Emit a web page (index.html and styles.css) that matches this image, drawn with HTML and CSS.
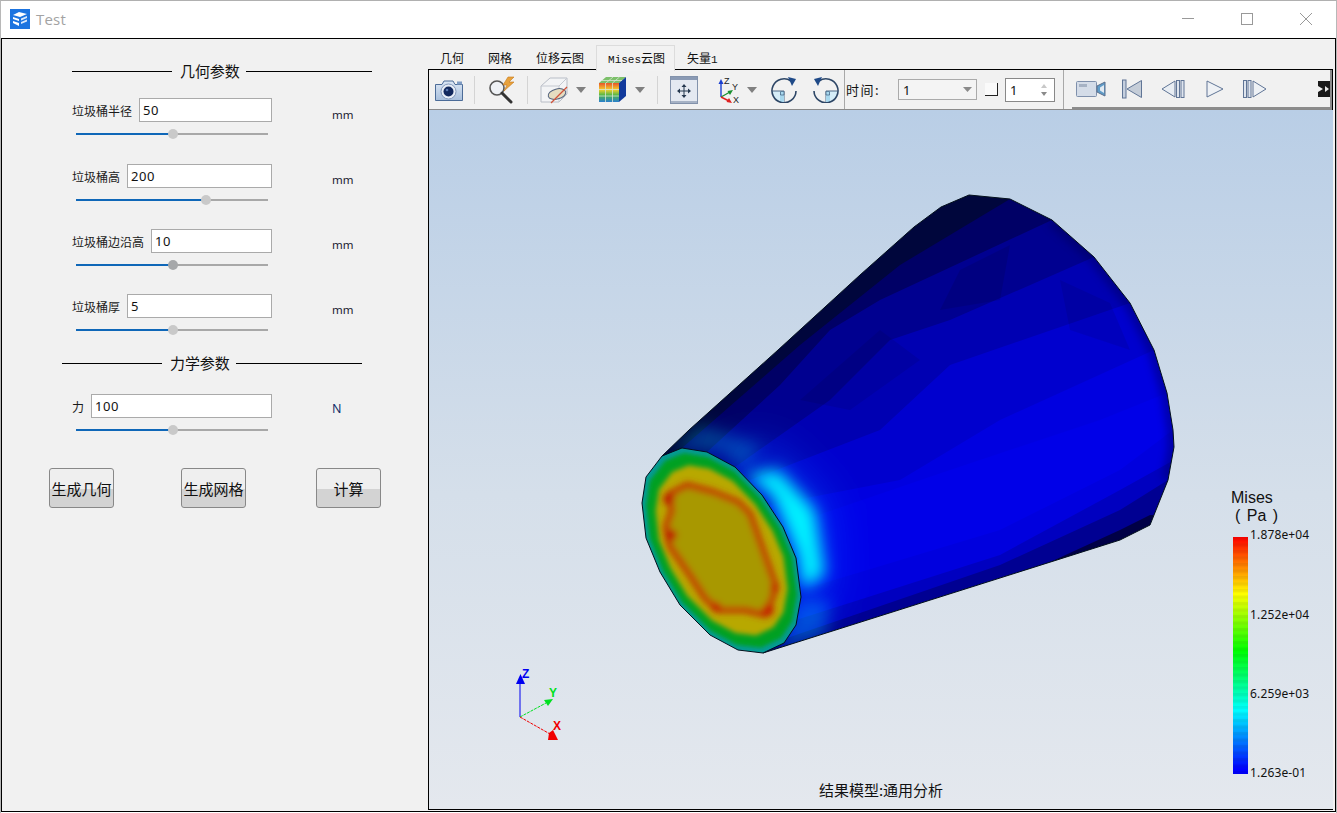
FILE: index.html
```html
<!DOCTYPE html>
<html lang="zh">
<head>
<meta charset="utf-8">
<title>Test</title>
<link rel="stylesheet" href="styles.css">
</head>
<body>
<div class="window">
  <header class="titlebar">
    <svg class="app-icon" width="20" height="20" viewBox="0 0 20 20">
      <rect width="20" height="20" fill="#1c74e0"/>
      <path d="M3 6 L9 3 L17 5 L10 8 Z M3 8 L9 10 V12 L3 10 Z M3 12 L9 14 V17 L3 14 Z" fill="#fff"/>
      <path d="M11 9.5 L17 7 V9 L11 11.5 Z M11 13 L17 10.5 V12.5 L11 15 Z" fill="#dbe9fb"/>
    </svg>
    <span class="app-name">Test</span>
    <div class="win-btns">
      <svg width="58" height="14" viewBox="0 0 58 14"><path d="M23 6.500H35" stroke="#999" fill="none"/></svg>
      <svg width="58" height="14" viewBox="0 0 58 14"><rect x="23.500" y="1.500" width="11" height="11" stroke="#999" fill="none"/></svg>
      <svg width="58" height="14" viewBox="0 0 58 14"><path d="M23 1L35 13M35 1L23 13" stroke="#999" fill="none"/></svg>
    </div>
  </header>
  <main class="content">
    <section class="params">
      <div class="heading"><span class="rule"></span><span class="heading-text">几何参数</span><span class="rule rule-r"></span></div>
      <div class="param param-first">
        <div class="field"><label>垃圾桶半径</label><input value="50"></div><span class="unit">mm</span>
        <div class="slider"><span class="fill" style="width:97px"></span><span class="thumb"></span><span class="rest"></span></div>
      </div>
      <div class="param">
        <div class="field"><label>垃圾桶高</label><input value="200"></div><span class="unit">mm</span>
        <div class="slider"><span class="fill" style="width:130px"></span><span class="thumb"></span><span class="rest"></span></div>
      </div>
      <div class="param">
        <div class="field"><label>垃圾桶边沿高</label><input value="10"></div><span class="unit">mm</span>
        <div class="slider"><span class="fill" style="width:97px"></span><span class="thumb thumb-dark"></span><span class="rest"></span></div>
      </div>
      <div class="param param-last">
        <div class="field"><label>垃圾桶厚</label><input value="5"></div><span class="unit">mm</span>
        <div class="slider"><span class="fill" style="width:97px"></span><span class="thumb"></span><span class="rest"></span></div>
      </div>
      <div class="heading heading-2"><span class="rule"></span><span class="heading-text">力学参数</span><span class="rule rule-r"></span></div>
      <div class="param param-force">
        <div class="field"><label>力</label><input value="100"></div><span class="unit unit-n">N</span>
        <div class="slider"><span class="fill" style="width:97px"></span><span class="thumb"></span><span class="rest"></span></div>
      </div>
      <div class="actions">
        <button>生成几何</button><button>生成网格</button><button>计算</button>
      </div>
    </section>
    <section class="results">
      <nav class="tabs">
        <span class="tab">几何</span><span class="tab">网格</span><span class="tab">位移云图</span><span class="tab tab-active"><span class="mono">Mises</span>云图</span><span class="tab">矢量<span class="mono">1</span></span>
      </nav>
      <div class="frame">
        <div class="toolbar">
          <svg class="ti camera" width="30" height="24" viewBox="0 0 30 24">
            <defs><linearGradient id="cam" x1="0" y1="0" x2="0" y2="1"><stop offset="0" stop-color="#dce7f5"/><stop offset="1" stop-color="#a8bfdc"/></linearGradient></defs>
            <path d="M1.500 6.500 H8 L10 3 H19 L21 6.500 H28.500 V22.500 H1.500 Z" fill="url(#cam)" stroke="#4c6c98" stroke-linejoin="round"/>
            <rect x="23" y="3.500" width="5" height="3" fill="#7f9cc4"/>
            <circle cx="14.500" cy="13.500" r="7.500" fill="#e8eef7" stroke="#8398ba"/>
            <circle cx="14.500" cy="13.500" r="5" fill="#13295e"/>
            <circle cx="13" cy="12" r="1.300" fill="#5a78b0"/>
          </svg>
          <span class="sep"></span>
          <svg class="ti magnifier" width="30" height="28" viewBox="0 0 30 28">
            <circle cx="10" cy="12" r="7" fill="#eef1f5" stroke="#555" stroke-width="1.600"/>
            <path d="M15 17 L24 26" stroke="#333" stroke-width="3" stroke-linecap="round"/>
            <path d="M21 1 L16 9 H20 L17 15 L27 6 H22 L27 1 Z" fill="#e8a23c" stroke="#c67a1c" stroke-width=".6"/>
          </svg>
          <span class="sep"></span>
          <svg class="ti cube" width="29" height="28" viewBox="0 0 29 28">
            <path d="M1 10 L10 2 H27 V18 L19 26 H1 Z" fill="#f3f4f6" stroke="#b8bdc6"/>
            <path d="M1 10 H19 V26 M19 10 L27 2" fill="none" stroke="#c4c8d0"/>
            <ellipse cx="17" cy="18" rx="9" ry="5" fill="#e5dcc0" stroke="#53627c" transform="rotate(-15 17 18)"/>
            <path d="M11 27 L27 11" stroke="#d0533a" stroke-width="1.200"/>
          </svg>
          <svg class="ti caret" width="10" height="6" viewBox="0 0 10 6"><path d="M0 0H10L5 6Z" fill="#808080"/></svg>
          <svg class="ti colorcube" width="28" height="27" viewBox="0 0 28 27">
            <defs><linearGradient id="rain" x1="0" y1="0" x2="0" y2="1"><stop offset="0" stop-color="#e8542a"/><stop offset=".35" stop-color="#f4d02c"/><stop offset=".65" stop-color="#49b54a"/><stop offset="1" stop-color="#2c7fd0"/></linearGradient></defs>
            <path d="M0 7 L7 1 H27 L20 7 Z" fill="#7cc06a"/>
            <path d="M20 7 L27 1 V20 L20 26 Z" fill="#123a9c"/>
            <rect x="0" y="7" width="20" height="19" fill="url(#rain)"/>
            <path d="M6.500 7V26M13.500 7V26M0 13.500H20M0 20H20M7 7 L14 1M13.500 7 L20.500 1M3 4.500H23" stroke="#d9e4d4" stroke-width=".8" fill="none"/>
          </svg>
          <svg class="ti caret" width="10" height="6" viewBox="0 0 10 6"><path d="M0 0H10L5 6Z" fill="#808080"/></svg>
          <span class="sep sep-b"></span>
          <svg class="ti fit" width="28" height="28" viewBox="0 0 28 28">
            <rect x=".5" y=".5" width="27" height="27" fill="#e4e9f1" stroke="#8292ab"/>
            <rect x="1" y="1" width="26" height="3" fill="#8a9ab4"/>
            <rect x="1" y="25" width="26" height="2" fill="#a6b2c5"/>
            <path d="M14 10V20M9 15H19" stroke="#25384f" fill="none"/>
            <path d="M14 8L11.500 11H16.500ZM14 22L11.500 19H16.500ZM7 15L10 12.500V17.500ZM21 15L18 12.500V17.500Z" fill="#25384f"/>
          </svg>
          <svg class="ti axes" width="25" height="28" viewBox="0 0 25 28">
            <path d="M6 21V7" stroke="#1a3fd0" stroke-width="1.400"/><path d="M6 3L3.500 8H8.500Z" fill="#1a3fd0"/>
            <path d="M6 21L15 16" stroke="#1a9030" stroke-width="1.400"/><path d="M18 14L12.500 15L15 19Z" fill="#1a9030"/>
            <path d="M6 21L14 25" stroke="#e02020" stroke-width="1.400"/><path d="M17 27L11.500 26L14 22Z" fill="#e02020"/>
            <text class="axis-t" x="9" y="8">Z</text><text class="axis-t" x="17" y="14">Y</text><text class="axis-t" x="18" y="27">X</text>
          </svg>
          <svg class="ti caret" width="10" height="6" viewBox="0 0 10 6"><path d="M0 0H10L5 6Z" fill="#808080"/></svg>
          <svg class="ti rot" width="27" height="26" viewBox="0 0 27 26">
            <path d="M13 14H1.500A12 12 0 0 0 13 25.500Z" fill="#d6edf8"/>
            <path d="M1.500 14H13V25.500" fill="none" stroke="#2c4a6c" stroke-width=".8"/>
            <path d="M9 14H13V25H9Z" fill="#a8d8ee"/>
            <path d="M9.500 14.500H13V18H9.500Z" fill="none" stroke="#2c4a6c" stroke-width=".6"/>
            <path d="M20 4A12 12 0 1 0 25 14" fill="none" stroke="#2d4666" stroke-width="1.600"/>
            <path d="M17 0L25 2L21 9Z" fill="#1f4a88"/>
          </svg>
          <svg class="ti rot rot-2" width="27" height="26" viewBox="0 0 27 26">
            <path d="M14 14H25.500A12 12 0 0 1 14 25.500Z" fill="#d6edf8"/>
            <path d="M25.500 14H14V25.500" fill="none" stroke="#2c4a6c" stroke-width=".8"/>
            <path d="M14 14H18V25H14Z" fill="#a8d8ee"/>
            <path d="M14 14.500H17.500V18H14Z" fill="none" stroke="#2c4a6c" stroke-width=".6"/>
            <path d="M7 4A12 12 0 1 1 2 14" fill="none" stroke="#2d4666" stroke-width="1.600"/>
            <path d="M10 0L2 2L6 9Z" fill="#1f4a88"/>
          </svg>
          <span class="sep sep-full"></span>
          <span class="time-label">时间:</span>
          <div class="combo"><span class="latin">1</span><svg width="9" height="5" viewBox="0 0 9 5"><path d="M0 0H9L4.500 5Z" fill="#8a8a8a"/></svg></div>
          <span class="check"></span>
          <div class="spin"><span class="latin">1</span><svg width="6" height="14" viewBox="0 0 6 14"><path d="M3 1L6 5H0Z" fill="#c8c8c8"/><path d="M3 13L6 9H0Z" fill="#8a8a8a"/></svg></div>
          <span class="sep sep-full sep-c"></span>
          <div class="player">
            <svg class="pi" width="30" height="18" viewBox="0 0 30 18">
              <rect x=".5" y="1.500" width="20" height="15" rx="1" fill="#d4dce8" stroke="#7f90ac"/>
              <rect x="3" y="4" width="8" height="3" fill="#a6b2c4"/>
              <path d="M21 6L29 2V16L21 12Z" fill="#5f9cc8" stroke="#5c6f8c"/>
              <path d="M24 7.500L28 5V13L24 10.500Z" fill="#e2eaf2"/>
            </svg>
            <svg class="pi pi-a" width="20" height="20" viewBox="0 0 20 20"><rect x=".5" y="1" width="3.500" height="18" fill="#c5cfde" stroke="#607596"/><path d="M19.500 1.500V18.500L5 10Z" fill="#c5cdd8" stroke="#607596"/></svg>
            <svg class="pi pi-b" width="24" height="20" viewBox="0 0 24 20"><path d="M14 2V18L1 10Z" fill="#e8edf3" stroke="#607596"/><rect x="15.500" y="1.500" width="3" height="17" fill="#dfe5ee" stroke="#607596"/><rect x="20" y="1.500" width="3" height="17" fill="#dfe5ee" stroke="#607596"/></svg>
            <svg class="pi pi-c" width="18" height="20" viewBox="0 0 18 20"><path d="M1 2V18L17 10Z" fill="#eef1f5" stroke="#607596"/></svg>
            <svg class="pi pi-d" width="24" height="20" viewBox="0 0 24 20"><rect x=".5" y="1.500" width="3" height="17" fill="#dfe5ee" stroke="#607596"/><rect x="5" y="1.500" width="3" height="17" fill="#dfe5ee" stroke="#607596"/><path d="M10 2V18L23 10Z" fill="#eef1f5" stroke="#607596"/></svg>
            <svg class="pi pi-e" width="12" height="18" viewBox="0 0 12 18"><path d="M0 1H12V17H0V12L5 9L0 6Z" fill="#1a1a1a"/><path d="M7 6L11 9L7 12Z" fill="#e8e8e8"/></svg>
          </div>
        </div>
        <div class="view">
          <svg class="scene" width="904" height="699" viewBox="429 110 904 699">
            <defs>
              <linearGradient id="bg" x1="0" y1="0" x2="0" y2="1"><stop offset="0" stop-color="#b9cee6"/><stop offset=".55" stop-color="#d5dfea"/><stop offset="1" stop-color="#e4e8ee"/></linearGradient>
              <linearGradient id="ramp" x1="0" y1="0" x2="0" y2="1"><stop offset="0" stop-color="#ff0000"/><stop offset=".24" stop-color="#ffff00"/><stop offset=".48" stop-color="#00ff00"/><stop offset=".73" stop-color="#00ffff"/><stop offset=".98" stop-color="#0000ff"/><stop offset="1" stop-color="#0000ff"/></linearGradient>
              <pattern id="bands" width="4" height="6.500" patternUnits="userSpaceOnUse" y="537"><rect width="4" height="3.200" fill="#000" opacity=".05"/></pattern>
              <filter id="b2" x="-20%" y="-20%" width="140%" height="140%"><feGaussianBlur stdDeviation="2.500"/></filter>
              <filter id="b3" x="-20%" y="-20%" width="140%" height="140%"><feGaussianBlur stdDeviation="3"/></filter>
              <filter id="b4" x="-20%" y="-20%" width="140%" height="140%"><feGaussianBlur stdDeviation="4"/></filter>
              <filter id="b8" x="-50%" y="-50%" width="200%" height="200%"><feGaussianBlur stdDeviation="8"/></filter>
              <filter id="b12" x="-50%" y="-50%" width="200%" height="200%"><feGaussianBlur stdDeviation="11"/></filter>
              <filter id="b24" x="-50%" y="-50%" width="200%" height="200%"><feGaussianBlur stdDeviation="22"/></filter>
              <clipPath id="body"><polygon points="662,456 689,430 778,350 860,275 914,227 941,207 969,195 1010,199 1052,220 1094,257 1130,303 1154,350 1167,393 1173,430 1174,447 1168,480 1150,525 1120,540 763,653"/></clipPath>
              <clipPath id="cap"><polygon points="662,456 682,448 707,452 735,467 762,495 783,527 796,558 801,597 796,625 784,643 763,653 738,650 710,635 680,605 660,572 646,538 642,503 646,477"/></clipPath>
            </defs>
            <rect x="429" y="110" width="904" height="699" fill="url(#bg)"/>

            <g clip-path="url(#body)">
              <rect x="640" y="190" width="540" height="470" fill="#00063c"/>
              <polygon fill="#000066" points="682,448 800,345 900,265 1010,199 1200,199 1200,660 682,660"/>
              <polygon fill="#000090" points="707,452 780,385 830,330 880,300 1052,220 1200,220 1200,660 700,660"/>
              <polygon fill="#0000b2" points="735,467 830,400 890,340 950,320 1094,257 1200,257 1200,660 700,660"/>
              <polygon fill="#0000ce" points="750,480 880,430 950,365 1130,303 1200,303 1200,660 700,660"/>
              <polygon fill="#0000e0" points="770,505 900,480 1000,420 1154,350 1200,350 1200,660 700,660"/>
              <polygon fill="#0000e8" points="783,527 950,470 1100,420 1167,393 1200,393 1200,660 700,660"/>
              <polygon fill="#0000de" points="801,590 1000,530 1120,470 1173,430 1200,430 1200,660 700,660"/>
              <polygon fill="#0000c0" points="796,620 1000,555 1120,490 1174,460 1200,460 1200,660 700,660"/>
              <polygon fill="#000092" points="790,637 1000,565 1120,510 1168,480 1200,480 1200,660 700,660"/>
              <polygon fill="#000046" points="770,652 1000,585 1120,530 1150,515 1200,515 1200,660 700,660"/>
              <polygon points="800,400 880,330 920,360 850,410" fill="#000" opacity=".08"/>
              <polygon points="960,270 1010,245 1000,300 940,310" fill="#000" opacity=".1"/>
              <polygon points="1060,280 1110,303 1130,350 1070,330" fill="#000" opacity=".08"/>
              <polyline points="1052,220 1094,257 1130,303 1154,350 1167,393 1173,430 1174,447 1168,480" fill="none" stroke="#00004a" stroke-width="12" opacity=".4" filter="url(#b4)"/>
              <polygon points="725,450 750,470 790,530 805,600 800,630 830,590 825,505 770,450" fill="#0058ff" opacity=".6" filter="url(#b24)" class="screen"/>
              <polygon points="745,475 772,495 797,555 802,590 825,575 815,510 778,470" fill="#00f0ff" filter="url(#b8)" class="screen"/>
              <polygon points="672,450 720,452 745,470 760,445 700,425" fill="#0090a8" opacity=".4" filter="url(#b8)" class="screen"/>
              <polygon points="796,600 780,650 825,635 830,600" fill="#0090b0" opacity=".5" filter="url(#b8)" class="screen"/>
            </g>
            <polyline class="edge" points="662,456 689,430 778,350 860,275 914,227 941,207 969,195 1010,199 1052,220 1094,257 1130,303 1154,350 1167,393 1173,430 1174,447 1168,480 1150,525 1120,540 763,653"/>

            <g clip-path="url(#cap)">
              <rect x="630" y="440" width="180" height="220" fill="#059a98"/>
              <polygon points="662,456 682,448 707,452 735,467 762,495 783,527 796,558 801,597 796,625 784,643 763,653 738,650 710,635 680,605 660,572 646,538 642,503 646,477" transform="translate(722 550) scale(.95) translate(-722 -550)" fill="#00a020" filter="url(#b2)"/>
              <polygon points="662,456 682,448 707,452 735,467 762,495 783,527 796,558 801,597 796,625 784,643 763,653 738,650 710,635 680,605 660,572 646,538 642,503 646,477" transform="translate(722 550) scale(.83) translate(-722 -550)" fill="#b8a800" filter="url(#b3)"/>
              <g filter="url(#b3)">
                <polygon points="668,495 687,485 713,492 738,502 750,514 760,542 776,587 766,615 745,610 718,610 705,598 690,575 670,546 666,527 672,510" fill="#a89800" stroke="#b8a000" stroke-width="2"/>
                <polyline points="668,495 687,485 713,492 738,502 750,514 760,542 776,587 766,615 745,610 718,610 705,598 690,575 670,546 666,527 672,510 668,495" fill="none" stroke="#c23000" stroke-width="6" stroke-linejoin="round"/>
                <circle cx="669" cy="499" r="6" fill="#bc2200"/>
                <circle cx="671" cy="535" r="6" fill="#bc2200"/>
                <circle cx="768" cy="610" r="6" fill="#c42200"/>
                <circle cx="774" cy="588" r="4" fill="#c42200"/>
                <circle cx="716" cy="607" r="5" fill="#c42200"/>
              </g>
            </g>
            <polygon class="edge" points="662,456 682,448 707,452 735,467 762,495 783,527 796,558 801,597 796,625 784,643 763,653 738,650 710,635 680,605 660,572 646,538 642,503 646,477"/>

            <path d="M520 717V684" stroke="#0000f0" fill="none"/>
            <polygon points="520.500,674 516,684 525,684" fill="#0000f0"/>
            <text class="triad t-z" x="522" y="678">Z</text>
            <path d="M520 717L546 703" stroke="#00e020" fill="none" stroke-dasharray="3 1"/>
            <polygon points="544,700 553,699 548,706" fill="#00e020"/>
            <text class="triad t-y" x="549" y="697">Y</text>
            <path d="M520 717L550 734" stroke="#f00000" fill="none" stroke-dasharray="3 1"/>
            <polygon points="549,733 553,730 558,740 548,740" fill="#f00000"/>
            <text class="triad t-x" x="553" y="730">X</text>

            <text class="legend-title" x="1231" y="503">Mises</text>
            <text class="legend-title legend-unit" x="1235" y="521">( Pa )</text>
            <rect x="1233" y="537" width="15" height="237" fill="url(#ramp)"/>
            <rect x="1233" y="537" width="15" height="237" fill="url(#bands)"/>
            <text class="legend-val" x="1250" y="539">1.878e+04</text>
            <text class="legend-val" x="1250" y="619">1.252e+04</text>
            <text class="legend-val" x="1250" y="698">6.259e+03</text>
            <text class="legend-val" x="1250" y="777">1.263e-01</text>
            <text class="caption" x="881" y="796">结果模型:通用分析</text>
          </svg>
        </div>
      </div>
    </section>
  </main>
</div>
</body>
</html>
```

FILE: styles.css
```css
* { box-sizing: border-box; }
html, body { margin: 0; padding: 0; background: #fff; }
body { font-family: "Noto Sans CJK SC", "Noto Sans", sans-serif; font-size: 12px; color: #111; }

.window {
  width: 1337px;
  height: 813px;
  border-top: 1px solid #b0b0b0;
  border-left: 1px solid #b8b8b8;
  border-right: 1px solid #b8b8b8;
  display: flex;
  flex-direction: column;
  overflow: hidden;
}

.titlebar { height: 37px; flex: none; display: flex; align-items: center; padding: 0 0 2px 9px; background: #fff; }
.app-icon { flex: none; margin-top: 1px; }
.app-name { margin-left: 6px; font: 15px "Open Sans", "Noto Sans", sans-serif; color: #a3a3a3; letter-spacing: .2px; }
.win-btns { margin-left: auto; display: flex; padding-right: 1px; }
.win-btns svg { display: block; flex: none; }
.win-btns svg:first-child { margin-right: 1px; }
.win-btns svg:last-child { margin-left: 1px; }

.content { width: 1335px; height: 774px; flex: none; display: flex; border: 1px solid #000; background: #f1f1f1; }

.params { width: 426px; flex: none; padding: 22px 0 0 70px; }
.heading { display: flex; align-items: center; width: 300px; height: 20px; font-size: 15px; }
.rule { width: 100px; height: 1px; background: #000; }
.rule-r { width: 126px; }
.heading-text { margin: 0 7px 0 8px; width: 59px; white-space: nowrap; line-height: 20px; letter-spacing: -.1px; }
.heading-2 { margin: 0 0 21px -10px; }

.param { display: grid; grid-template-columns: 200px auto; grid-template-rows: 24px auto; column-gap: 60px; width: 300px; height: 65px; align-content: start; }
.params > .heading:first-child { margin-bottom: 17px; }
.param-first { height: 66px; }
.param-last { height: 59px; }
.param-force { height: 74px; }

.field { display: flex; align-items: center; height: 24px; }
.field label { white-space: nowrap; margin-right: 7px; color: #1a1a1a; }
.field input {
  flex: 1;
  min-width: 0;
  height: 24px;
  padding: 0 3px;
  border: 1px solid #aaa;
  background: #fff;
  font: 13px "Noto Sans", sans-serif;
  letter-spacing: .5px;
  color: #111;
  outline: none;
  border-radius: 0;
}
.unit { font: 11.5px "Noto Sans", sans-serif; color: #1a2030; margin-top: 7px; line-height: 18px; }
.param-first .unit { margin-top: 8px; }
.unit-n { margin-top: 6px; color: #14306a; font-size: 12.5px; }

.slider { grid-column: 1; display: flex; align-items: center; width: 192px; height: 12px; margin: 6px 0 0 4px; }
.fill { height: 2px; background: #0f67b8; flex: none; }
.rest { height: 2px; background: #a8a8a8; flex: 1; }
.thumb { width: 10px; height: 10px; border-radius: 50%; background: #c9c9c9; flex: none; margin-left: -5px; margin-right: -5px; position: relative; }
.thumb-dark { background: #a6a8aa; }

.actions { display: flex; margin-left: -23px; height: 40px; gap: 67px; }
.actions button {
  width: 65px;
  height: 40px;
  padding: 0;
  border: 1px solid #888;
  border-radius: 3px;
  background: linear-gradient(to bottom, #efefef 0, #efefef 52%, #d3d3d3 52%, #d3d3d3 100%);
  font: 15px "Noto Sans CJK SC", sans-serif;
  color: #111;
  white-space: nowrap;
}
.actions button:last-child { margin-left: 3px; }

.results { width: 907px; flex: none; padding-top: 6px; display: flex; flex-direction: column; }
.tabs { display: flex; height: 24px; flex: none; align-items: flex-start; }
.tab { padding: 0 12px; line-height: 25px; font-size: 12px; white-space: nowrap; color: #111; }
.tab-active { border: 1px solid #dcdcdc; border-bottom: 0; padding: 0 11px; height: 26px; background: #f2f2f2; line-height: 24px; position: relative; z-index: 1; width: 79px; }
.mono { font-family: "Liberation Mono", monospace; font-size: 11px; }

.frame { width: 905px; height: 741px; border: 1px solid #000; display: flex; flex-direction: column; background: #f1f1f1; }
.toolbar { height: 40px; flex: none; display: flex; align-items: center; border-bottom: 1px solid #8a8a8a; padding-left: 5px; }
.toolbar svg { flex: none; display: block; }
.sep { width: 1px; height: 28px; background: #d4d4d4; flex: none; margin: 0 12px 0 10px; }
.ti.cube + .caret { margin-left: 7px; }
.caret { margin-top: 1px; }
.ti.colorcube { margin-left: 13px; }
.colorcube + .caret { margin-left: 8px; }
.sep.sep-b { margin: 0 12px 0 12px; }
.ti.axes { margin-left: 17px; }
.axes + .caret { margin-left: 7px; }
.ti.rot { margin-left: 14px; }
.sep.sep-full { height: 39px; margin: 0 1px 0 5px; background: #a8a8a8; }
.axis-t { font: 9px "Liberation Sans", sans-serif; fill: #222; }
.time-label { font-size: 13px; width: 52px; white-space: nowrap; letter-spacing: 1.5px; }
.combo { width: 79px; height: 21px; border: 1px solid #aaa; background: #f4f4f4; display: flex; align-items: center; justify-content: space-between; padding: 0 4px; }
.latin { font: 13px "Noto Sans", sans-serif; color: #111; }
.check { width: 13px; height: 13px; flex: none; margin-left: 8px; background: #fafafa; border-right: 1px solid #222; border-bottom: 1px solid #222; }
.spin { width: 50px; height: 24px; margin-left: 7px; border: 1px solid #888; background: #fff; display: flex; align-items: center; justify-content: space-between; padding: 0 7px 0 4px; }
.sep.sep-c { margin: 0 8px 0 8px; }
.player { flex: 1; height: 39px; align-self: flex-start; display: flex; align-items: center; border-bottom: 2px solid #8c8c8c; border-right: 2px solid #8c8c8c; padding-left: 4px; }
.pi-a { margin-left: 16px; }
.pi-b { margin-left: 19px; }
.pi-c { margin-left: 21px; }
.pi-d { margin-left: 19px; }
.pi-e { margin-left: 51px; }

.view { flex: 1; min-height: 0; }
.scene { display: block; }
.edge { fill: none; stroke: #03101c; stroke-width: 1; }
.screen { mix-blend-mode: screen; }
.triad { font: bold 12px "Liberation Sans", sans-serif; }
.t-z { fill: #0000f0; }
.t-y { fill: #00e020; }
.t-x { fill: #f00000; }
.legend-title { font: 16px "Liberation Sans", sans-serif; fill: #111; }
.legend-unit { word-spacing: 2px; }
.legend-val { font: 12px "Noto Sans", sans-serif; fill: #111; letter-spacing: .15px; }
.caption { font: 15px "Noto Sans CJK SC", sans-serif; fill: #111; text-anchor: middle; }
```
